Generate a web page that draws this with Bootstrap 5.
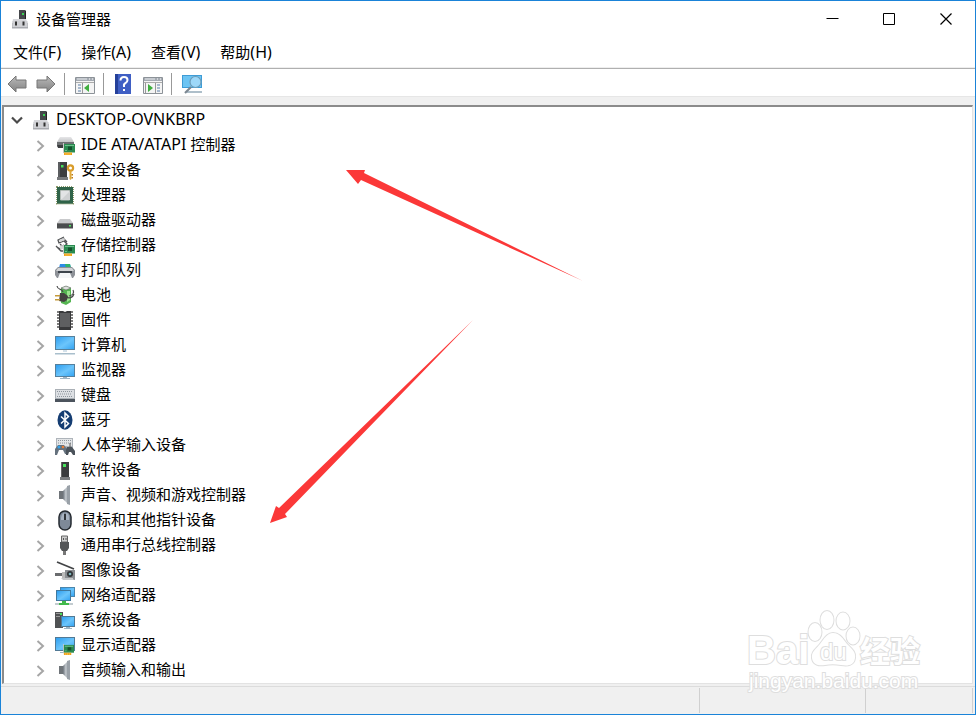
<!DOCTYPE html>
<html lang="zh-CN">
<head>
<meta charset="utf-8">
<meta name="viewport" content="width=device-width, initial-scale=1">
<title>设备管理器</title>
<link rel="stylesheet" href="https://cdn.jsdelivr.net/npm/bootstrap@5.3.0/dist/css/bootstrap.min.css">
<style>
body { font: 15px/25px "Noto Sans", "Noto Sans CJK SC", sans-serif; color: #000; background: #fff; }
.app-window { border: 1px solid #1a83d8; }
button { padding: 0; border: 0; background: none; color: inherit; display: flex; align-items: center; justify-content: center; }
.latin { font-size: 16px; }
.title-bar { height: 37px; padding-left: 10px; }
.title-bar h1 { font-size: 15px; line-height: 25px; font-weight: 400; margin: 0 0 0 7px; }
.win-btn { width: 57px; height: 37px; }
.win-btn:hover, .menu-strip button:hover { background: #e5f3ff; }
.menu-strip { height: 30px; padding-left: 2px; border-bottom: 1px solid #eee; }
.menu-strip button { padding: 0 10px; }
.tool-strip { height: 29px; padding: 2px 0 0 6px; border-top: 1px solid #b0b0b0; border-bottom: 1px solid #e6e6e6; }
.tool-strip button { width: 20px; height: 22px; }
.tool-strip button + button { margin-left: 9px; }
.tool-sep { width: 1px; height: 22px; background: #999; margin: 0 10px 0 8px; }
.work-area { background: #f0f0f0; padding: 8px 2px 2px 1px; }
.tree-pane { background: #fff; border: 2px solid #8b8b8b; border-right: 1px solid #e3e3e3; border-bottom: 1px solid #e3e3e3; padding-top: 1px; overflow: hidden; }
.tree-line { height: 25px; gap: 6px; padding-left: 27px; white-space: nowrap; }
.tree-line.root-line { padding-left: 4px; }
.tree-line button { width: 18px; height: 25px; }
.tree-line > svg { width: 20px; height: 21px; flex: none; }
.tree-line.root-line > svg { width: 18px; }
.tree-text { padding-bottom: 2px; }
.status-strip { height: 28px; background: #f0f0f0; border-top: 1px solid #dcdcdc; padding: 1px 2px 1px 0; }
.status-strip span { border-right: 1px solid #d0d0d0; }
.pane-mid { width: 166px; }
.pane-end { width: 107px; }
.arrows { position: absolute; left: 264px; top: 56px; pointer-events: none; }
.brand { position: absolute; right: 0; bottom: 0; pointer-events: none; }
.brand text, .brand path, .brand ellipse { fill: #fff; stroke: #dedede; stroke-width: 2px; paint-order: stroke; }
.brand text { font-family: "Liberation Sans", "Noto Sans CJK SC", sans-serif; }
</style>
<script src="https://cdn.jsdelivr.net/npm/bootstrap@5.3.0/dist/js/bootstrap.bundle.min.js"></script>
</head>
<body>
<svg width="0" height="0" class="position-absolute" aria-hidden="true">
  <defs>
    <linearGradient id="blue" x1="0" y1="0" x2="1" y2="1"><stop offset="0" stop-color="#2f9ff0"/><stop offset=".55" stop-color="#6cc5fb"/><stop offset="1" stop-color="#36a5f3"/></linearGradient>
    <linearGradient id="steel" x1="0" y1="0" x2="0" y2="1"><stop offset="0" stop-color="#e6e6e8"/><stop offset="1" stop-color="#a3a5a8"/></linearGradient>
    <linearGradient id="cone" x1="0" y1="0" x2="1" y2="0"><stop offset="0" stop-color="#6c737b"/><stop offset=".6" stop-color="#c9ced3"/><stop offset="1" stop-color="#7a828a"/></linearGradient>
    <linearGradient id="arrowfill" x1="0" y1="0" x2="0" y2="1"><stop offset="0" stop-color="#bababa"/><stop offset="1" stop-color="#828282"/></linearGradient>
  </defs>
  <symbol id="chev" viewBox="0 0 18 25"><path d="M6.500 8l5.500 5-5.500 5" fill="none" stroke="#a6a6a6" stroke-width="2"/></symbol>
  <symbol id="chev-open" viewBox="0 0 18 25"><path d="M4 9.500l5 5 5-5" fill="none" stroke="#4a4a4a" stroke-width="2.200"/></symbol>
  <symbol id="pc" viewBox="0 0 18 21"><path d="M8 1h6v10H8z" fill="#45484b"/><path d="M14 1l1 1v9h-1z" fill="#222"/><path d="M11 4h2v2h-2z" fill="#39d552"/><path d="M2 10h13l2 5H1z" fill="#d5d6da"/><path d="M1 14h16v5.500H1z" fill="#a9abb0"/><path d="M1.500 12h15v6h-15z" fill="#cfd0d4"/><path d="M4 12.500h2v4H4zM11.500 12.500h2v4h-2z" fill="#333"/></symbol>
  <symbol id="card" viewBox="0 0 12 12"><path d="M0 0h1v10H0z" fill="#c9c9c9"/><path d="M1 1h11v8.500H1z" fill="#2a8a50"/><path d="M2 2h9v1H2zM2 7h2v1H2z" fill="#6cc08b"/><path d="M5 3.500h4v3.500H5z" fill="#15512e"/><path d="M1 9.500h8V12H1z" fill="#f0a21c"/><path d="M3 10v2M5 10v2M7 10v2" stroke="#ffd56a" stroke-width=".600"/></symbol>
  <symbol id="ide" viewBox="0 0 20 21"><path d="M5 2h11l3 5v5H2V7z" fill="url(#steel)"/><path d="M2 7h17v3H2z" fill="#6d7072"/><path d="M2 10h7v3H3z" fill="#3b3d3f"/><use href="#card" x="8" y="8" width="12" height="12"/></symbol>
  <symbol id="security" viewBox="0 0 20 21"><path d="M3 2h9v15H3z" fill="#3d3e40"/><path d="M3 2h2v15H3z" fill="#5b5d60"/><path d="M2 17h11v3H2z" fill="#77797c"/><path d="M6 5h2.500v2.500H6z" fill="#46e05a"/><circle cx="15.500" cy="8" r="2.600" fill="none" stroke="#d99d2b" stroke-width="2.200"/><path d="M14.500 11h2v8l-1 1-1-1z" fill="#e1aa39"/><path d="M16.500 14H18v1.500h-1.500zM16.500 17H18v1.500h-1.500z" fill="#b97b17"/></symbol>
  <symbol id="cpu" viewBox="0 0 20 21"><path d="M2 2h16v16.500H2z" fill="#2f6349" stroke="#8e9a6b" stroke-width="2" stroke-dasharray="1 1"/><path d="M2 2h16v16.500H2z" fill="#2f6349"/><path d="M5.500 5.500h9v9.500h-9z" fill="#e2e4e5" stroke="#b4bdb8"/><path d="M6 15L15 6v9z" fill="#ced1d2"/></symbol>
  <symbol id="disk" viewBox="0 0 20 21"><path d="M5 9h10l3 4H2z" fill="#c9cacc"/><path d="M2 13h16v5.500H2z" fill="#4a4c4e"/><path d="M2 13h16v1H2z" fill="#777"/><path d="M14 15h2v1.500h-2z" fill="#4ee45d"/></symbol>
  <symbol id="storage" viewBox="0 0 20 21"><path d="M9 2L3 5l1 3 5-2 3 3-7 5-3-2M8 3l4 4M5 9l4 4M1 11l5 5h4" fill="none" stroke="#505254" stroke-width="1.300"/><path d="M4 5l5-2 1 2-5 2zM4 12l3-2 2 3-3 2z" fill="#d4d5d6"/><use href="#card" x="8" y="9" width="12" height="12"/></symbol>
  <symbol id="printer" viewBox="0 0 20 21"><path d="M5 4h10l1 4H4z" fill="#2c8be6"/><path d="M10 4h5l1 4h-5z" fill="#31b36a"/><path d="M3 7h14l3 3v5l-2 3h-2l-1-4H5l-1 4H2l-2-3v-5z" fill="#8d9197"/><path d="M3 8h14l2 3H1z" fill="#d1d3d6"/><path d="M3 11h14v2H3z" fill="#3d444c"/><path d="M5 13h10l2 5H3z" fill="#f4f6f8"/></symbol>
  <symbol id="battery" viewBox="0 0 20 21"><path d="M6 3l5-2 5 2v14l-5 3-5-2z" fill="#55b552"/><path d="M6 3l5-2 5 2-5 2z" fill="#dfe1df" stroke="#666" stroke-width=".600"/><path d="M12 6h3v9l-3 2z" fill="#9be38d"/><path d="M2 1c1 5 5 2 6 6M14 11c5-1 5-4 4-6M11 12c4 2 7 0 8-3" fill="none" stroke="#4a4a4a" stroke-width="1.200"/><path d="M5 8h4l4 3-1 4-3 2-5-1z" fill="#444240"/><path d="M0 10h5v1.500H0zM0 14h5v1.500H0z" fill="#c59a3b"/></symbol>
  <symbol id="firmware" viewBox="0 0 20 21"><path d="M2 2h3M2 5h3M2 8h3M2 11h3M2 14h3M2 17h3M15 2h3M15 5h3M15 8h3M15 11h3M15 14h3M15 17h3" stroke="#525252" stroke-width="1.500"/><path d="M4 1h4l2 1 2-1h4v19H4z" fill="#38393b"/><path d="M5 3h10v14H5z" fill="#5e5f61"/></symbol>
  <symbol id="computer" viewBox="0 0 20 21"><path d="M0 1h20v14H0z" fill="#56809c"/><path d="M1 2h18v12H1z" fill="url(#blue)"/><path d="M8 15h4v2H8z" fill="#d4e1ea"/><path d="M0 18h20v1.500H0z" fill="#a9bfcc"/></symbol>
  <symbol id="monitor" viewBox="0 0 20 21"><path d="M0 4h20v13H0z" fill="#56809c"/><path d="M1 5h18v11H1z" fill="url(#blue)"/><path d="M8 17h4v1h3v1H5v-1h3z" fill="#9fb5c4"/></symbol>
  <symbol id="keyboard" viewBox="0 0 20 21"><path d="M0 4h20v13H0z" fill="#aab0b6"/><path d="M1 5h18v8H1z" fill="#dcdfe3"/><path d="M2 6.500h16M3 9h14M2 11.500h16" stroke="#8c949c" stroke-dasharray="1 1"/><path d="M0 14h20v3H0z" fill="#4c545d"/></symbol>
  <symbol id="bluetooth" viewBox="0 0 20 21"><ellipse cx="10" cy="10" rx="7.500" ry="9.700" fill="#153d72"/><path d="M6 6.500l7.500 7L10 17V3l3.500 3.500-7.500 7" fill="none" stroke="#fff" stroke-width="1.500"/></symbol>
  <symbol id="hid" viewBox="0 0 20 21"><path d="M1 3h17v12H1z" fill="#aeb4ba"/><path d="M2 4h15v7H2z" fill="#e3e5e7"/><path d="M3 5.500h13M3 8h13" stroke="#8c949c" stroke-dasharray="1 1"/><path d="M3 10h6l3 4v5h-2l-2-4H4l-2 5H0v-6z" fill="#65717d"/><circle cx="4" cy="12" r="1.500" fill="#36a2e9"/><circle cx="8" cy="12" r="1.300" fill="#e67d38"/><path d="M12 12h5l3 4v4h-2l-2-3h-2l-1 3h-2v-5z" fill="#4b535b"/><path d="M15 8v5" stroke="#555"/></symbol>
  <symbol id="software" viewBox="0 0 20 21"><path d="M6 2h8v15H6z" fill="#3b3c3e"/><path d="M6 2h1v15H6z" fill="#666"/><path d="M5 17h10v3H5z" fill="#7c7e80"/><path d="M8 4h3v3H8z" fill="#47e45b"/></symbol>
  <symbol id="speaker" viewBox="0 0 20 21"><path d="M4 6h4v8H4z" fill="#6f7479"/><path d="M8 6l5-5v18l-5-5z" fill="url(#cone)"/><path d="M12 1l3-1v20l-3-1z" fill="#9aa1a8"/></symbol>
  <symbol id="mouse" viewBox="0 0 20 21"><rect x="4" y="1" width="12" height="19" rx="6" fill="#7e8998" stroke="#252a30" stroke-width="1.500"/><path d="M6 8q1-5 3-5v7H6zM11 3q3 0 3 5v2h-3z" fill="#a7b2c0"/><path d="M10 4v6" stroke="#1d2023" stroke-width="1.600"/></symbol>
  <symbol id="usb" viewBox="0 0 20 21"><path d="M6.500 1h6v6h-6z" fill="#ccc" stroke="#666"/><path d="M8 3h1v2H8zM10.500 3h1v2h-1z" fill="#555"/><path d="M5 7h9v6l-2 3H7l-2-3z" fill="#535557"/><path d="M8 16h3v4H8z" fill="#777"/></symbol>
  <symbol id="imaging" viewBox="0 0 20 21"><path d="M2 2l17 7" stroke="#424446" stroke-width="1.800"/><path d="M0 13h7v3H0z" fill="#6a6c6e"/><path d="M7 12h3v6H7z" fill="#bbb"/><path d="M10 10h10v10l-10-2z" fill="#8b8f93"/><path d="M6 18h12v2H8z" fill="#c5c7c9"/><circle cx="15" cy="14" r="3" fill="#2f3336"/><circle cx="15" cy="14" r="1.300" fill="#7eb6bd"/></symbol>
  <symbol id="network" viewBox="0 0 20 21"><path d="M5 2h15v10H5z" fill="#4b86ac"/><path d="M6 3h13v8H6z" fill="url(#blue)"/><path d="M1 5h15v11H1z" fill="#41789d"/><path d="M2 6h13v9H2z" fill="url(#blue)"/><path d="M7 16h4v2h3v2H4v-2h3z" fill="#41ba4b"/><path d="M0 18h4v2H0zM14 18h4v2h-4z" fill="#c3ccd0"/></symbol>
  <symbol id="system" viewBox="0 0 20 21"><path d="M0 2h8v16H0z" fill="#505254"/><path d="M1 3h6v1H1zM1 6h4v1H1z" fill="#999"/><path d="M5 3h2v2H5z" fill="#4cde5a"/><path d="M6 6h14v11H6z" fill="#517995"/><path d="M7 7h12v9H7z" fill="url(#blue)"/><path d="M11 17h4v1h2v1H9v-1h2z" fill="#9fb5c4"/></symbol>
  <symbol id="display" viewBox="0 0 20 21"><path d="M0 2h20v14H0z" fill="#517995"/><path d="M1 3h18v12H1z" fill="url(#blue)"/><path d="M5 17h4v1H5z" fill="#9fb5c4"/><use href="#card" x="8" y="9" width="11" height="11"/></symbol>
  <symbol id="back" viewBox="0 0 20 20"><path d="M1 10l8-8v4h10v8H9v4z" fill="url(#arrowfill)" stroke="#777"/></symbol>
  <symbol id="panel" viewBox="0 0 20 20"><path d="M.5 3.500h19v16H.5z" fill="#f4f4f4" stroke="#8c9298"/><path d="M1 4h18v3H1z" fill="#a5abb3"/><path d="M2 5h10" stroke="#e8ebee"/><path d="M14 5h1M17 5h1" stroke="#fff"/><path d="M1 8.500h18" stroke="#aaa"/></symbol>
</svg>

<div class="app-window vh-100 d-flex flex-column position-relative overflow-hidden">
  <header class="title-bar d-flex align-items-center">
    <svg width="18" height="21" aria-hidden="true"><use href="#pc"/></svg>
    <h1>设备管理器</h1>
    <div class="d-flex ms-auto">
      <button class="win-btn" type="button" aria-label="最小化"><svg width="13" height="13"><path d="M.5 5.500h12" stroke="#000"/></svg></button>
      <button class="win-btn" type="button" aria-label="最大化"><svg width="13" height="13"><path d="M.5.5h11v11H.5z" fill="none" stroke="#000"/></svg></button>
      <button class="win-btn" type="button" aria-label="关闭"><svg width="13" height="13"><path d="M.5.5l11 11M11.500.5l-11 11" stroke="#000" stroke-width="1.200"/></svg></button>
    </div>
  </header>
  <nav class="menu-strip d-flex align-items-center" aria-label="菜单">
    <button type="button">文件<span class="latin">(F)</span></button>
    <button type="button">操作<span class="latin">(A)</span></button>
    <button type="button">查看<span class="latin">(V)</span></button>
    <button type="button">帮助<span class="latin">(H)</span></button>
  </nav>
  <div class="tool-strip d-flex align-items-center" role="toolbar" aria-label="工具栏">
    <button type="button" aria-label="后退"><svg width="20" height="20"><use href="#back"/></svg></button>
    <button type="button" aria-label="前进"><svg width="20" height="20"><use href="#back" transform="matrix(-1 0 0 1 20 0)"/></svg></button>
    <span class="tool-sep"></span>
    <button type="button" aria-label="显示控制台树"><svg width="20" height="20"><use href="#panel"/><path d="M3 11h3M3 14h3M3 17h3" stroke="#5b7fa8"/><path d="M7.500 9v10" stroke="#999"/><path d="M14 10v8l-5-4z" fill="#3fae3f"/></svg></button>
    <span class="tool-sep"></span>
    <button type="button" aria-label="帮助"><svg width="18" height="20"><path d="M0 0h16v20H0z" fill="#3f5fc4"/><path d="M0 0h3v20H0z" fill="#25409a"/><path d="M5.500 6.500q0-3.500 3.500-3.500t3.500 3q0 2-2 3.200T9 12v1" fill="none" stroke="#fff" stroke-width="2"/><path d="M8 15h2v2H8z" fill="#fff"/></svg></button>
    <button type="button" aria-label="显示操作窗格"><svg width="20" height="20"><use href="#panel"/><path d="M14 11h3M14 14h3M14 17h3" stroke="#5b7fa8"/><path d="M12.500 9v10M2.500 9v10" stroke="#999"/><path d="M5 10v8l5-4z" fill="#3fae3f"/></svg></button>
    <span class="tool-sep"></span>
    <button type="button" aria-label="扫描检测硬件改动"><svg width="20" height="20"><path d="M0 1h20v13H0z" fill="#3e9cd6"/><path d="M1 2h18v11H1z" fill="#6cc4f3"/><path d="M5 17h15v2H5z" fill="#aebfca"/><path d="M9 13l-6 6" stroke="#7b8791" stroke-width="2.200"/><circle cx="13.500" cy="8" r="5.500" fill="#a6dcf9" fill-opacity=".85" stroke="#6d9cb8" stroke-width="1.200"/></svg></button>
  </div>
  <main class="work-area flex-grow-1 d-flex flex-column">
    <div class="tree-pane flex-grow-1">
      <div class="tree-line root-line d-flex align-items-center"><button type="button" aria-label="折叠" aria-expanded="true"><svg width="18" height="25"><use href="#chev-open"/></svg></button><svg><use href="#pc"/></svg><span class="tree-text latin">DESKTOP-OVNKBRP</span></div>
      <ul class="list-unstyled mb-0">
        <li class="tree-line d-flex align-items-center"><button type="button" aria-label="展开"><svg width="18" height="25"><use href="#chev"/></svg></button><svg><use href="#ide"/></svg><span class="tree-text"><span class="latin">IDE ATA/ATAPI </span>控制器</span></li>
        <li class="tree-line d-flex align-items-center"><button type="button" aria-label="展开"><svg width="18" height="25"><use href="#chev"/></svg></button><svg><use href="#security"/></svg><span class="tree-text">安全设备</span></li>
        <li class="tree-line d-flex align-items-center"><button type="button" aria-label="展开"><svg width="18" height="25"><use href="#chev"/></svg></button><svg><use href="#cpu"/></svg><span class="tree-text">处理器</span></li>
        <li class="tree-line d-flex align-items-center"><button type="button" aria-label="展开"><svg width="18" height="25"><use href="#chev"/></svg></button><svg><use href="#disk"/></svg><span class="tree-text">磁盘驱动器</span></li>
        <li class="tree-line d-flex align-items-center"><button type="button" aria-label="展开"><svg width="18" height="25"><use href="#chev"/></svg></button><svg><use href="#storage"/></svg><span class="tree-text">存储控制器</span></li>
        <li class="tree-line d-flex align-items-center"><button type="button" aria-label="展开"><svg width="18" height="25"><use href="#chev"/></svg></button><svg><use href="#printer"/></svg><span class="tree-text">打印队列</span></li>
        <li class="tree-line d-flex align-items-center"><button type="button" aria-label="展开"><svg width="18" height="25"><use href="#chev"/></svg></button><svg><use href="#battery"/></svg><span class="tree-text">电池</span></li>
        <li class="tree-line d-flex align-items-center"><button type="button" aria-label="展开"><svg width="18" height="25"><use href="#chev"/></svg></button><svg><use href="#firmware"/></svg><span class="tree-text">固件</span></li>
        <li class="tree-line d-flex align-items-center"><button type="button" aria-label="展开"><svg width="18" height="25"><use href="#chev"/></svg></button><svg><use href="#computer"/></svg><span class="tree-text">计算机</span></li>
        <li class="tree-line d-flex align-items-center"><button type="button" aria-label="展开"><svg width="18" height="25"><use href="#chev"/></svg></button><svg><use href="#monitor"/></svg><span class="tree-text">监视器</span></li>
        <li class="tree-line d-flex align-items-center"><button type="button" aria-label="展开"><svg width="18" height="25"><use href="#chev"/></svg></button><svg><use href="#keyboard"/></svg><span class="tree-text">键盘</span></li>
        <li class="tree-line d-flex align-items-center"><button type="button" aria-label="展开"><svg width="18" height="25"><use href="#chev"/></svg></button><svg><use href="#bluetooth"/></svg><span class="tree-text">蓝牙</span></li>
        <li class="tree-line d-flex align-items-center"><button type="button" aria-label="展开"><svg width="18" height="25"><use href="#chev"/></svg></button><svg><use href="#hid"/></svg><span class="tree-text">人体学输入设备</span></li>
        <li class="tree-line d-flex align-items-center"><button type="button" aria-label="展开"><svg width="18" height="25"><use href="#chev"/></svg></button><svg><use href="#software"/></svg><span class="tree-text">软件设备</span></li>
        <li class="tree-line d-flex align-items-center"><button type="button" aria-label="展开"><svg width="18" height="25"><use href="#chev"/></svg></button><svg><use href="#speaker"/></svg><span class="tree-text">声音、视频和游戏控制器</span></li>
        <li class="tree-line d-flex align-items-center"><button type="button" aria-label="展开"><svg width="18" height="25"><use href="#chev"/></svg></button><svg><use href="#mouse"/></svg><span class="tree-text">鼠标和其他指针设备</span></li>
        <li class="tree-line d-flex align-items-center"><button type="button" aria-label="展开"><svg width="18" height="25"><use href="#chev"/></svg></button><svg><use href="#usb"/></svg><span class="tree-text">通用串行总线控制器</span></li>
        <li class="tree-line d-flex align-items-center"><button type="button" aria-label="展开"><svg width="18" height="25"><use href="#chev"/></svg></button><svg><use href="#imaging"/></svg><span class="tree-text">图像设备</span></li>
        <li class="tree-line d-flex align-items-center"><button type="button" aria-label="展开"><svg width="18" height="25"><use href="#chev"/></svg></button><svg><use href="#network"/></svg><span class="tree-text">网络适配器</span></li>
        <li class="tree-line d-flex align-items-center"><button type="button" aria-label="展开"><svg width="18" height="25"><use href="#chev"/></svg></button><svg><use href="#system"/></svg><span class="tree-text">系统设备</span></li>
        <li class="tree-line d-flex align-items-center"><button type="button" aria-label="展开"><svg width="18" height="25"><use href="#chev"/></svg></button><svg><use href="#display"/></svg><span class="tree-text">显示适配器</span></li>
        <li class="tree-line d-flex align-items-center"><button type="button" aria-label="展开"><svg width="18" height="25"><use href="#chev"/></svg></button><svg><use href="#speaker"/></svg><span class="tree-text">音频输入和输出</span></li>
      </ul>
    </div>
  </main>
  <footer class="status-strip d-flex">
    <span class="flex-grow-1"></span><span class="pane-mid"></span><span class="pane-end"></span>
  </footer>

  <svg class="arrows" width="330" height="480" viewBox="265 57 330 480" aria-hidden="true">
    <path d="M346 170h19l-1 3 219 108-222-101-3 4z" fill="#fb3838"/>
    <path d="M270 523l6-17 3 2 194-188-188 194 2 3z" fill="#fb3838"/>
  </svg>
  <svg class="brand" width="245" height="114" viewBox="730 600 245 114" aria-hidden="true">
    <text x="747" y="664" font-size="40" font-weight="700">Bai</text>
    <ellipse cx="815" cy="632" rx="6.500" ry="9"/><ellipse cx="827" cy="620" rx="6.500" ry="9"/><ellipse cx="843" cy="621" rx="6.500" ry="8.500"/><ellipse cx="853" cy="636" rx="6.500" ry="8.500"/>
    <path d="M833 633c7 0 10 6 14 11 5 5 9 8 8 14-1 8-8 8-14 7-6-1-11-1-16 0-6 1-12 0-13-7-1-6 4-9 8-14 4-5 7-11 13-11z"/>
    <text x="820" y="660" font-size="24">du</text>
    <text x="860" y="662" font-size="30" font-weight="700">经验</text>
    <text x="749" y="688" font-size="21">jingyan.baidu.com</text>
  </svg>
</div>
</body>
</html>
